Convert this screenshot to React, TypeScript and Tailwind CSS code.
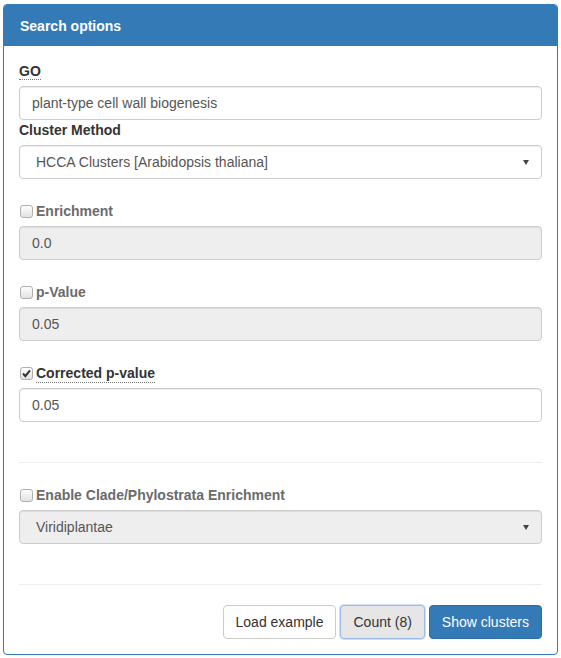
import type { ReactNode } from 'react';

const font = { fontFamily: '"Liberation Sans", Arial, sans-serif' };

function Check({ checked }: { checked?: boolean }) {
  return (
    <span className="relative inline-flex w-[13px] h-[13px] shrink-0 rounded-[3px] border border-[#b0b0b0] bg-gradient-to-b from-[#fdfdfd] to-[#e2e2e2]">
      {checked && (
        <svg viewBox="0 0 13 13" className="absolute -left-px -top-px w-[13px] h-[13px]">
          <path d="M3 6.5 L5.4 9.2 L10 3.3" fill="none" stroke="#333" strokeWidth="2" />
        </svg>
      )}
    </span>
  );
}

function Label({ children, abbr, muted }: { children: ReactNode; abbr?: boolean; muted?: boolean }) {
  return (
    <div className={`h-5 leading-5 text-sm font-bold mb-[5px] ${muted ? 'text-[#6b6b6b]' : 'text-[#333]'}`}>
      <span className={abbr ? 'border-b border-dotted border-[#777]' : ''}>{children}</span>
    </div>
  );
}

function CheckLabel({ children, checked, abbr }: { children: ReactNode; checked?: boolean; abbr?: boolean }) {
  return (
    <div className={`flex items-center h-5 mb-[5px] text-sm font-bold ${checked ? 'text-[#333]' : 'text-[#6b6b6b]'}`}>
      <span className="ml-px mr-[3px] flex items-center">
        <Check checked={checked} />
      </span>
      <span className={`leading-5 ${abbr ? 'border-b border-dotted border-[#777] leading-[18px]' : ''}`}>{children}</span>
    </div>
  );
}

function Input({ value, disabled }: { value: string; disabled?: boolean }) {
  return (
    <div
      className={`h-[34px] flex items-center px-3 rounded border border-[#ccc] text-sm text-[#555] shadow-[inset_0_1px_1px_rgba(0,0,0,0.075)] ${
        disabled ? 'bg-[#eee]' : 'bg-white'
      }`}
    >
      {value}
    </div>
  );
}

function Select({ value, disabled }: { value: string; disabled?: boolean }) {
  return (
    <div
      className={`h-[34px] flex items-center justify-between pl-4 pr-3 rounded border border-[#ccc] text-sm text-[#555] shadow-[inset_0_1px_1px_rgba(0,0,0,0.075)] ${
        disabled ? 'bg-[#eee]' : 'bg-white'
      }`}
    >
      <span>{value}</span>
      <span className="w-0 h-0 border-l-[3px] border-r-[3px] border-t-[5px] border-l-transparent border-r-transparent border-t-[#444]" />
    </div>
  );
}

export default function App() {
  return (
    <div className="bg-white min-h-[658px] pt-1 px-[3px]" style={font}>
      <div className="rounded border border-[#337ab7] overflow-hidden">
        {/* heading */}
        <div className="bg-[#337ab7] h-[41px] px-4 flex items-center text-white text-sm font-bold">
          Search options
        </div>

        <div className="px-[15px] pt-[15px] pb-[15px]">
          <Label abbr>GO</Label>
          <Input value="plant-type cell wall biogenesis" />
          <Label>Cluster Method</Label>
          <Select value="HCCA Clusters [Arabidopsis thaliana]" />

          <div className="mt-[22px]">
            <CheckLabel>Enrichment</CheckLabel>
            <Input value="0.0" disabled />
          </div>

          <div className="mt-[22px]">
            <CheckLabel>p-Value</CheckLabel>
            <Input value="0.05" disabled />
          </div>

          <div className="mt-[22px]">
            <CheckLabel checked abbr>Corrected p-value</CheckLabel>
            <Input value="0.05" />
          </div>

          <div className="mt-[40px] border-t border-[#eee]" />

          <div className="mt-[22px]">
            <CheckLabel>Enable Clade/Phylostrata Enrichment</CheckLabel>
            <Select value="Viridiplantae" disabled />
          </div>

          <div className="mt-[40px] border-t border-[#eee]" />

          {/* actions */}
          <div className="mt-5 flex justify-end gap-1 text-sm">
            <button className="h-[34px] px-3 rounded border border-[#ccc] bg-white text-[#333]">
              Load example
            </button>
            <button className="h-[34px] px-3 rounded border border-[#9cbbe6] bg-[#e6e6e6] text-[#333] shadow-[0_0_0_1px_rgba(120,160,220,0.35)]">
              Count (8)
            </button>
            <button className="h-[34px] px-3 rounded border border-[#2e6da4] bg-[#337ab7] text-white">
              Show clusters
            </button>
          </div>
        </div>
      </div>
    </div>
  );
}
